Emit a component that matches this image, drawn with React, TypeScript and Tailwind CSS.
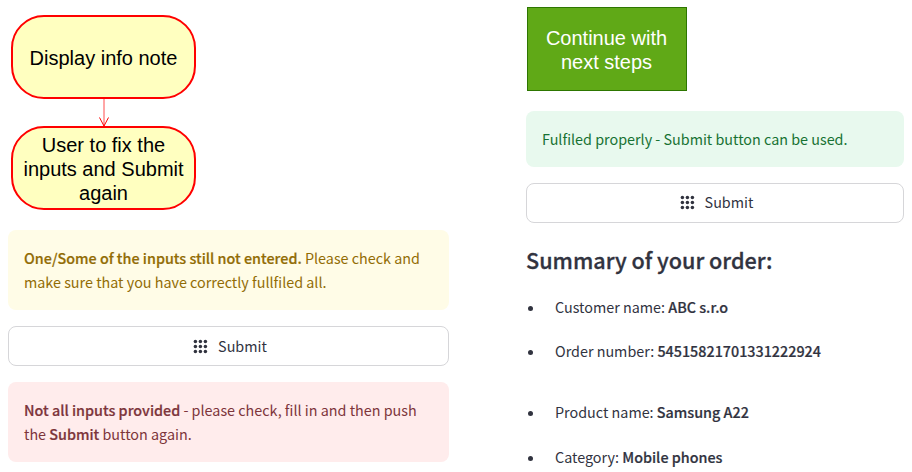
import type { ReactNode } from "react";

const dots = [2.4, 7.4, 12.4];

function AppsIcon() {
  return (
    <svg className="h-[15px] w-[15px] shrink-0" viewBox="0 0 15 15" fill="#31333f">
      {dots.map((y) => dots.map((x) => <circle key={`${x}-${y}`} cx={x} cy={y} r="1.75" />))}
    </svg>
  );
}

function SubmitButton({ className }: { className: string }) {
  return (
    <button className={`flex h-10 w-full items-center justify-center gap-[10px] rounded-lg border border-[#d6d6d9] bg-white pl-[3px] leading-6 ${className}`}>
      <AppsIcon />
      <span>Submit</span>
    </button>
  );
}

function Strong({ children }: { children: ReactNode }) {
  return <b className="font-medium [-webkit-text-stroke:0.2px_currentColor]">{children}</b>;
}

function Alert({ className, children }: { className: string; children: ReactNode }) {
  return <div className={`rounded-lg p-4 leading-6 whitespace-nowrap ${className}`}>{children}</div>;
}

function FlowNode({ children }: { children: ReactNode }) {
  return (
    <div className="flex h-[84px] w-[185px] items-center justify-center rounded-[33px] border-2 border-[#ff0000] bg-[#ffffc0] pt-[2px] text-center font-['Liberation_Sans',sans-serif] text-[20px] leading-6 whitespace-nowrap text-black">
      <div>{children}</div>
    </div>
  );
}

function Item({ label, value, className }: { label: string; value: string; className: string }) {
  return (
    <li className={`flex h-6 items-center leading-6 whitespace-nowrap ${className}`}>
      <span className="mt-[2px] mr-[22px] ml-[2px] h-[5px] w-[5px] rounded-full bg-[#31333f]" />
      <span>
        {label} <Strong>{value}</Strong>
      </span>
    </li>
  );
}

export default function App() {
  return (
    <div className="flex h-[472px] w-[912px] overflow-hidden bg-white pl-2 font-['Noto_Sans_CJK_SC',sans-serif] text-[14.35px] text-[#31333f]">
      <div className="flex w-[441px] flex-col pt-[15px]">
        <div className="ml-[3px] flex w-[185px] flex-col items-center">
          <FlowNode>Display info note</FlowNode>
          <svg className="h-[27px] w-[12px]" viewBox="0 0 12 27" fill="none" stroke="#ff0000">
            <path d="M6 0V27" strokeWidth="1" opacity=".7" />
            <path d="M1.5 18.5L6 27L10.5 18.5" strokeWidth="1" />
          </svg>
          <FlowNode>
            User to fix the
            <br />
            inputs and Submit
            <br />
            again
          </FlowNode>
        </div>
        <div className="mt-5 flex flex-col gap-4">
          <Alert className="bg-[#fffce7] text-[#926c05]">
            <Strong>One/Some of the inputs still not entered.</Strong> Please check and
            <br />
            make sure that you have correctly fullfiled all.
          </Alert>
          <SubmitButton className="pb-0" />
          <Alert className="bg-[#ffecec] text-[#7d353b]">
            <Strong>Not all inputs provided</Strong> - please check, fill in and then push
            <br />
            the <Strong>Submit</Strong> button again.
          </Alert>
        </div>
      </div>
      <div className="ml-[77px] flex w-[378px] flex-col pt-[7px]">
        <div className="ml-px flex h-[84px] w-[160px] items-center justify-center border border-[#2d7600] bg-[#60a917] pt-[2px] pr-px text-center font-['Liberation_Sans',sans-serif] text-[20px] leading-6 text-white">
          <div>
            Continue with
            <br />
            next steps
          </div>
        </div>
        <div className="mt-5 flex flex-col gap-4">
          <Alert className="bg-[#e8f9ee] text-[#177233]">Fulfiled properly - Submit button can be used.</Alert>
          <SubmitButton className="pb-[2px]" />
        </div>
        <h3 className="mt-[22px] text-[21.6px] leading-[29px] font-medium whitespace-nowrap [-webkit-text-stroke:0.3px_currentColor]">
          Summary of your order:
        </h3>
        <ul>
          <Item className="mt-[21px]" label="Customer name:" value="ABC s.r.o" />
          <Item className="mt-5" label="Order number:" value="54515821701331222924" />
          <Item className="mt-[37px]" label="Product name:" value="Samsung A22" />
          <Item className="mt-[21px]" label="Category:" value="Mobile phones" />
        </ul>
      </div>
    </div>
  );
}
